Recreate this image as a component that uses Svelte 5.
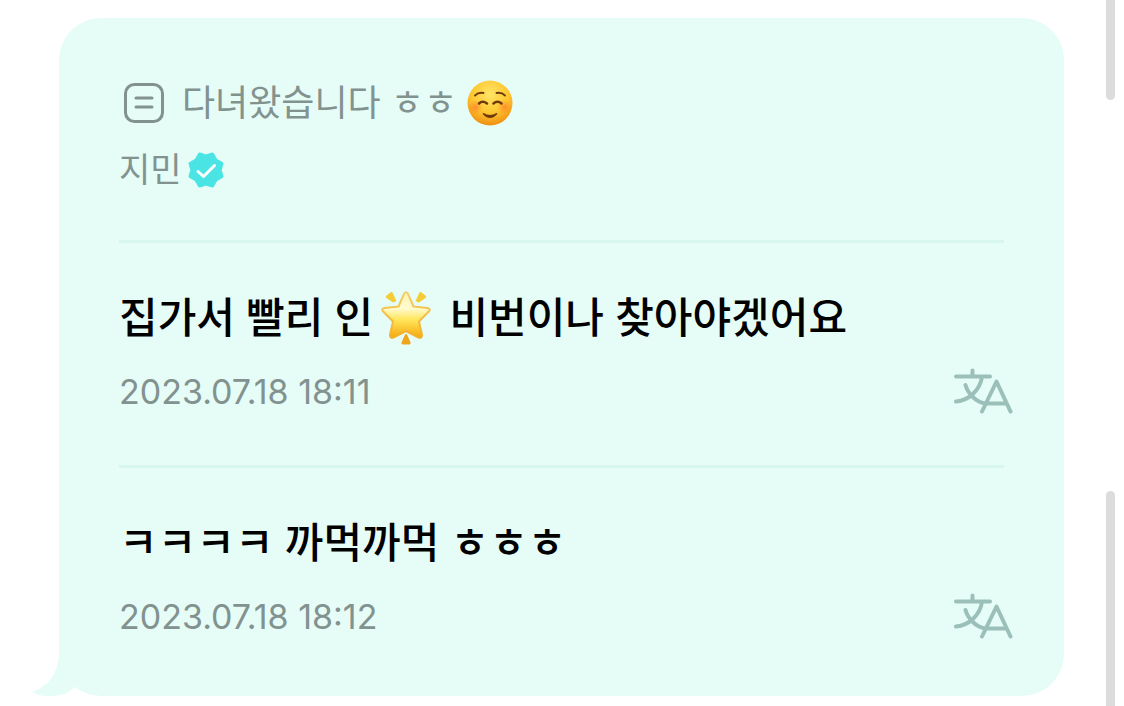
<script>
  const messages = [
    { before: '집가서 빨리 인', star: true, after: ' 비번이나 찾아야겠어요', time: '2023.07.18 18:11', iso: '2023-07-18T18:11' },
    { before: 'ㅋㅋㅋㅋ 까먹까먹 ㅎㅎㅎ', star: false, after: '', time: '2023.07.18 18:12', iso: '2023-07-18T18:12' }
  ];
</script>

<main class="page">
  <article class="bubble">
    <header class="head">
      <h1 class="title">
        <svg class="note" viewBox="0 0 40 40" aria-hidden="true">
          <rect x="1.5" y="1.5" width="37" height="37" rx="9" />
          <path d="M12 15h16M12 24h16" />
        </svg>
        <span>다녀왔습니다 ㅎㅎ</span>
        <svg class="smile" viewBox="0 0 46 46" role="img" aria-label="미소">
          <defs>
            <radialGradient id="face" cx=".5" cy=".3" r=".7">
              <stop offset="0" stop-color="#ffe566" />
              <stop offset=".6" stop-color="#fdc62f" />
              <stop offset="1" stop-color="#ef8f12" />
            </radialGradient>
            <radialGradient id="blush">
              <stop offset="0" stop-color="#ff6b2d" stop-opacity=".6" />
              <stop offset="1" stop-color="#ff7a2d" stop-opacity="0" />
            </radialGradient>
          </defs>
          <circle cx="23" cy="23" r="22.5" fill="url(#face)" />
          <circle cx="8.500" cy="27" r="7.5" fill="url(#blush)" />
          <circle cx="37.500" cy="27" r="7.5" fill="url(#blush)" />
          <g fill="none" stroke="#6e3a0c" stroke-linecap="round">
            <path stroke-width="1.800" d="M8 15.500q3.500-3.500 8.500-2.500M29.500 13q5-1 8.500 2.500" />
            <path stroke-width="2.500" d="M12 23.500q3.500-3.500 8 0M26.500 23.500q4-3.500 8 0" />
          </g>
          <path fill="#6e3a0c" d="M16.500 33q6.500 4.200 13 0q1.200-.3.600 1.300q-3 3.700-7.100 3.700t-7.100-3.700q-.6-1.600.6-1.300z" />
        </svg>
      </h1>
      <p class="author">
        <span>지민</span>
        <svg class="badge" viewBox="0 0 38 38" role="img" aria-label="인증됨">
          <path class="seal" d="M12.500 3L19 4.900L25.500 3L29 9L35 12.500L33.100 19L35 25.500L29 29L25.500 35L19 33.100L12.500 35L9 29L3 25.500L4.900 19L3 12.500L9 9z" />
          <path class="tick" d="M11 20.500l5.500 5L27.500 14.500" />
        </svg>
      </p>
    </header>

    {#each messages as m}
      <section class="message">
        <p class="text">
          <span>{m.before}</span>{#if m.star}<svg class="star" viewBox="0 0 50 56" role="img" aria-label="별">
            <defs>
              <linearGradient id="gold" x1="0" y1="0" x2="0" y2="1">
                <stop offset="0" stop-color="#fff3b0" />
                <stop offset=".35" stop-color="#fffbd0" />
                <stop offset=".6" stop-color="#ffe65c" />
                <stop offset="1" stop-color="#f5a80d" />
              </linearGradient>
              <linearGradient id="rim" x1="0" y1="0" x2="0" y2="1">
                <stop offset="0" stop-color="#f3cf69" />
                <stop offset="1" stop-color="#f3b02a" />
              </linearGradient>
            </defs>
            <path fill="url(#gold)" stroke="url(#rim)" stroke-width="2" stroke-linejoin="round" d="M23.200 3.500Q25 1 26.800 3.500L32.500 16.500L46.500 17.900Q50 18.500 48 21.300L38 31.500L41 45Q41 48.500 37.500 47.500L25 41L12.500 47.500Q9 48.500 9 45L12 31.500L2 21.300Q0 18.500 3.500 17.900L17.500 16.500z" />
            <path fill="#f4cc35" d="M9.500 2.500q1-1.500 2 0l4 8.500l-3.500 1.500l-6.500-4.500q-1-1-.5-2zM40.500 2.500q-1-1.500-2 0l-4 8.500l3.500 1.500l6.500-4.500q1-1 .5-2z" />
            <path fill="#eda51c" d="M24 44.500q1-1 2 0l3.500 8q.5 2-1.500 2h-6q-2 0-1.500-2z" />
          </svg>{/if}<span>{m.after}</span>
        </p>
        <div class="meta">
          <time datetime={m.iso}>{m.time}</time>
          <button type="button" class="translate" aria-label="번역">
            <svg viewBox="0 0 60 46" aria-hidden="true">
              <path d="M3 8.500h34M19.500 2.500v6M29 9C27 22 16 32.500 3 33.500M12.500 17C15 26 23 34 32 35.500M29 43.500L43.500 13.500L57.500 43.500M33 35.500h20" />
            </svg>
          </button>
        </div>
      </section>
    {/each}

    <svg class="tail" viewBox="0 0 44 48" aria-hidden="true">
      <path d="M27 0V4C27 24 17 39 0 43.500Q6 48 16 48H20Q34 48 44 38V0z" />
    </svg>
  </article>

  <div class="rail" aria-hidden="true">
    <div class="thumb upper"></div>
    <div class="thumb lower"></div>
  </div>
</main>

<style>
  :global(body) {
    margin: 0;
    background: #fff;
  }
  .page {
    display: flex;
    justify-content: space-between;
    gap: 42px;
    min-height: 100vh;
    padding: 0 9px 0 59px;
    box-sizing: border-box;
    font-family: Inter, "Noto Sans CJK KR", sans-serif;
    color: #000;
  }
  .bubble {
    position: relative;
    flex: 1;
    min-width: 0;
    align-self: flex-start;
    margin: 18px 0 10px;
    padding: 57px 60px 6px;
    box-sizing: border-box;
    border-radius: 42px;
    background: #e6fcf7;
  }
  .head {
    padding-bottom: 50px;
    color: #82928f;
  }
  .title,
  .author,
  .text {
    display: flex;
    align-items: center;
    margin: 0;
    font-weight: 400;
    white-space: pre;
  }
  .title {
    font-size: 36px;
    line-height: 56px;
  }
  .note {
    width: 40px;
    height: 40px;
    margin: 0 18px 0 5px;
    fill: none;
    stroke: #82928f;
    stroke-width: 3;
    stroke-linecap: round;
  }
  .smile {
    width: 46px;
    height: 46px;
    margin-left: 10px;
  }
  .author {
    margin-top: 19px;
    font-size: 34px;
    line-height: 40px;
  }
  .badge {
    width: 38px;
    height: 38px;
    margin-left: 5px;
  }
  .seal {
    fill: #4be4e4;
    stroke: #4be4e4;
    stroke-width: 3;
    stroke-linejoin: round;
  }
  .tick {
    fill: none;
    stroke: #fff;
    stroke-width: 3;
    stroke-linecap: round;
    stroke-linejoin: round;
  }
  .message {
    padding: 47px 0 54px;
    border-top: 3px solid #d6f6ee;
  }
  .text {
    font-size: 42px;
    font-weight: 500;
    line-height: 56px;
  }
  .star {
    width: 50px;
    height: 56px;
    margin: 0 7px 0 8px;
  }
  .meta {
    display: flex;
    align-items: center;
    justify-content: space-between;
    height: 40px;
    margin: 25px -9px 0 0;
    font-size: 34px;
    color: #82928f;
  }
  .translate {
    display: flex;
    padding: 0;
    border: 0;
    background: none;
    cursor: pointer;
  }
  .translate svg {
    width: 60px;
    height: 46px;
    fill: none;
    stroke: #9bbfb9;
    stroke-width: 4;
    stroke-linecap: round;
    stroke-linejoin: round;
  }
  .tail {
    position: absolute;
    left: -27px;
    bottom: 0;
    width: 44px;
    height: 48px;
    fill: #e6fcf7;
  }
  .rail {
    display: flex;
    flex-direction: column;
    gap: 391px;
    width: 9px;
  }
  .thumb {
    background: #dcdcdc;
  }
  .upper {
    height: 100px;
    border-radius: 0 0 5px 5px;
  }
  .lower {
    flex: 1;
    border-radius: 5px 5px 0 0;
  }
</style>
